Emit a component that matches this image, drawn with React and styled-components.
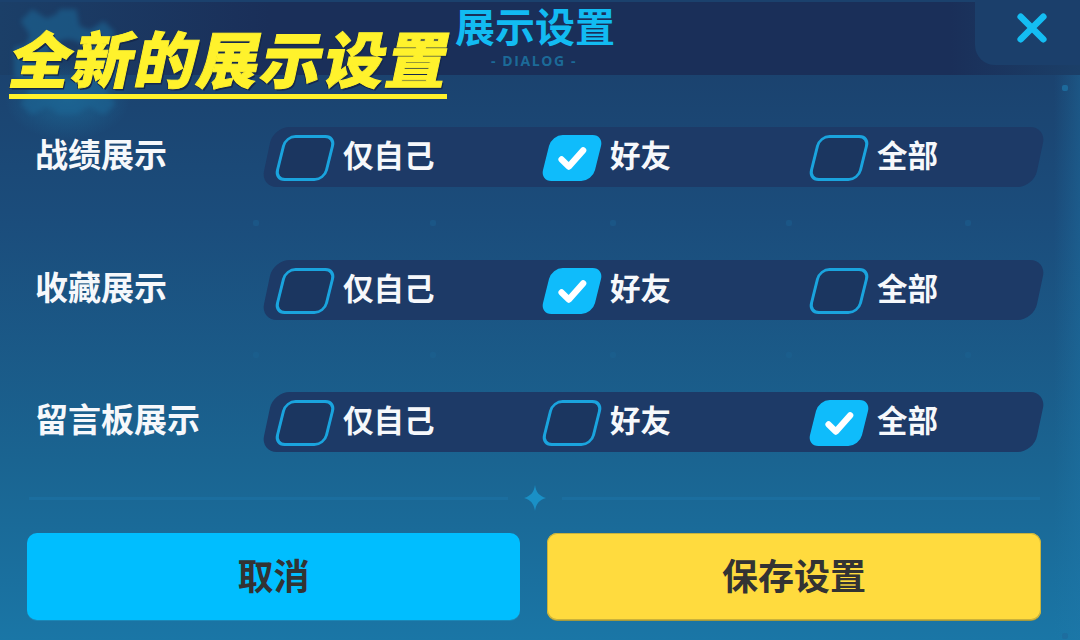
import React from 'react';
import styled, { createGlobalStyle } from 'styled-components';

const GlobalStyle = createGlobalStyle`
  html, body {
    margin: 0;
    padding: 0;
    background: #1b4a76;
  }
  * {
    box-sizing: border-box;
  }
`;

const FONT = '"Noto Sans CJK SC", "Noto Sans", sans-serif';

const Dialog = styled.div`
  position: relative;
  width: 1080px;
  height: 640px;
  overflow: hidden;
  display: flex;
  flex-direction: column;
  font-family: ${FONT};
  background: linear-gradient(180deg, #1b416d 8%, #1b4d7c 35%, #1a6491 72%, #1a76a6 100%);
`;

const EdgeShade = styled.div`
  position: absolute;
  top: 0;
  right: 0;
  bottom: 0;
  width: 26px;
  background: linear-gradient(90deg, rgba(30, 120, 170, 0) 0%, rgba(30, 120, 170, 0.35) 100%);
  pointer-events: none;
`;

const GearGlow = styled.div`
  position: absolute;
  left: 5px;
  top: 60px;
  width: 125px;
  height: 80px;
  border-radius: 50%;
  background: radial-gradient(closest-side, rgba(28, 105, 150, 0.8), rgba(28, 105, 150, 0));
`;

const Gear = styled.svg`
  position: absolute;
  left: 14px;
  top: 6px;
  width: 108px;
  height: 108px;
  color: #1c6594;
  opacity: 0.6;
  filter: blur(2.5px);
`;

const Dot = styled.i`
  position: absolute;
  left: ${(p) => p.$x}px;
  top: ${(p) => p.$y}px;
  width: 6px;
  height: 6px;
  border-radius: 2px;
  background: #1d6d9f;
  opacity: ${(p) => p.$o || 0.7};
`;

const Header = styled.header`
  position: relative;
  flex: none;
  height: 73px;
  margin-top: 2px;
  background: linear-gradient(90deg, #1b3f68 0%, #1a2f59 25%, #1a2f59 88%, #1b3f68 100%);
  display: flex;
  flex-direction: column;
  align-items: center;
`;

const Title = styled.h1`
  margin: -2px 0 0 -10px;
  font-size: 40px;
  line-height: 50px;
  font-weight: 700;
  color: #12bbf2;
`;

const SubTitle = styled.div`
  margin: 2px 0 0 -12px;
  font-family: "Open Sans", "Liberation Sans", sans-serif;
  font-size: 14px;
  line-height: 18px;
  font-weight: 700;
  letter-spacing: 1.6px;
  color: #1c6a98;
`;

const CloseTab = styled.button`
  position: absolute;
  right: 0;
  top: -2px;
  width: 105px;
  height: 65px;
  padding: 0 32px 10px 0;
  border: 0;
  border-bottom-left-radius: 20px;
  background: #1b3f6b;
  display: flex;
  align-items: center;
  justify-content: flex-end;
  color: #14bdf3;
`;

const Promo = styled.div`
  position: absolute;
  left: 9px;
  top: 24px;
  width: 438px;
  height: 75px;
  border-bottom: 5px solid #fff22c;
  text-align: center;
  white-space: nowrap;
`;

const PromoText = styled.span`
  display: inline-block;
  margin: -2px 0 0 3px;
  font-size: 61px;
  line-height: 70px;
  font-weight: 900;
  letter-spacing: 1.8px;
  color: #fff22c;
  -webkit-text-stroke: 1px #fff22c;
  transform: skewX(-12deg);
  text-shadow: 2px 2px 0 #14284d, -1px 1px 0 #14284d;
`;

const Rows = styled.div`
  display: flex;
  flex-direction: column;
  gap: 72.5px;
  margin-top: 52px;
  padding: 0 35px;
`;

const Row = styled.div`
  display: flex;
  align-items: center;
  height: 60px;
`;

const RowLabel = styled.div`
  flex: none;
  width: 227px;
  margin-top: -8px;
  font-size: 33px;
  line-height: 44px;
  font-weight: 700;
  color: #f6f8fb;
`;

const Track = styled.div`
  position: relative;
  width: 783px;
  height: 60px;
  padding-left: 13px;
  display: grid;
  grid-template-columns: repeat(3, 267px);
  align-items: center;

  &::before {
    content: '';
    position: absolute;
    inset: 0 5px;
    border-radius: 16px;
    background: #1d3a67;
    transform: skewX(-12deg);
  }
`;

const Option = styled.label`
  position: relative;
  display: flex;
  align-items: center;
  gap: 8px;
`;

const Box = styled.span`
  flex: none;
  width: 52px;
  height: 46px;
  margin: 2px 0 0 4px;
  border-radius: 11px;
  transform: skewX(-14deg);
  display: flex;
  align-items: center;
  justify-content: center;
  border: ${(p) => (p.$checked ? '0' : '3px solid #1aa4de')};
  background: ${(p) => (p.$checked ? '#0fbcfb' : '#1b3660')};
`;

const Check = styled.svg`
  width: 31px;
  height: 27px;
  transform: skewX(14deg);
`;

const OptionText = styled.span`
  margin: -6px 0 0 4px;
  font-size: 30.5px;
  line-height: 44px;
  font-weight: 700;
  color: #f6f8fb;
`;

const Divider = styled.div`
  display: flex;
  align-items: center;
  gap: 16px;
  margin-top: 34px;
  padding: 0 40px 0 29px;
  height: 24px;
`;

const DividerLine = styled.div`
  flex: 1;
  height: 3px;
  background: #1b6e9f;
`;

const Star = styled.svg`
  flex: none;
  width: 22px;
  height: 26px;
  color: #1a90c6;
`;

const Actions = styled.div`
  display: grid;
  grid-template-columns: 493px 494px;
  gap: 27px;
  margin-top: 23px;
  padding-left: 27px;
`;

const ActionButton = styled.button`
  height: 87px;
  padding: 0 0 5px;
  border: 0;
  border-radius: 10px;
  font-family: ${FONT};
  font-size: 36px;
  font-weight: 700;
  color: #333333;
  background: ${(p) => (p.$primary ? '#ffdb3e' : '#00beff')};
  box-shadow: ${(p) => (p.$primary ? 'inset 0 0 0 1px #c9b23c, 0 1px 0 #a59a3a' : '0 1px 0 #1a88b8')};
`;

const ROWS = [
  { label: '战绩展示', selected: 1 },
  { label: '收藏展示', selected: 1 },
  { label: '留言板展示', selected: 2 },
];

const CHOICES = ['仅自己', '好友', '全部'];

const DOTS = [
  [253, 220, 0.3], [430, 220, 0.3], [610, 220, 0.3], [786, 220, 0.3], [965, 220, 0.3],
  [253, 352, 0.2], [430, 352, 0.2], [610, 352, 0.2], [786, 352, 0.2], [965, 352, 0.2],
  [1062, 85, 0.9], [1062, 633, 1],
];

const GearIcon = () => (
  <Gear viewBox="0 0 130 130" aria-hidden="true">
    <path
      fill="currentColor"
      fillRule="evenodd"
      d="M55 4h20l4 20 12 5 17-11 14 14-11 17 5 12 20 4v20l-20 4-5 12 11 17-14 14-17-11-12 5-4 20H55l-4-20-12-5-17 11-14-14 11-17-5-12-20-4V51l20-4 5-12-11-17L22 4l17 11 12-5zM65 40a25 25 0 1 0 .1 0z"
    />
  </Gear>
);

const CloseIcon = () => (
  <svg width="32" height="32" viewBox="0 0 34 34" aria-hidden="true">
    <path d="M5 5 29 29M29 5 5 29" fill="none" stroke="currentColor" strokeWidth="7" strokeLinecap="round" />
  </svg>
);

const CheckIcon = () => (
  <Check viewBox="0 0 34 30" aria-hidden="true">
    <path d="M5 16 13 24 29 6" fill="none" stroke="#fff" strokeWidth="7" strokeLinecap="round" strokeLinejoin="round" />
  </Check>
);

const App = () => (
  <>
    <GlobalStyle />
    <Dialog>
      <EdgeShade />
      <Header>
        <Title>展示设置</Title>
        <SubTitle>- DIALOG -</SubTitle>
        <CloseTab aria-label="关闭">
          <CloseIcon />
        </CloseTab>
      </Header>
      <GearGlow />
      <GearIcon />
      {DOTS.map(([x, y, o]) => (
        <Dot key={`${x}-${y}`} $x={x} $y={y} $o={o} />
      ))}
      <Promo>
        <PromoText>全新的展示设置</PromoText>
      </Promo>
      <Rows>
        {ROWS.map((row) => (
          <Row key={row.label}>
            <RowLabel>{row.label}</RowLabel>
            <Track>
              {CHOICES.map((choice, i) => (
                <Option key={choice}>
                  <Box $checked={i === row.selected}>{i === row.selected && <CheckIcon />}</Box>
                  <OptionText>{choice}</OptionText>
                </Option>
              ))}
            </Track>
          </Row>
        ))}
      </Rows>
      <Divider>
        <DividerLine />
        <Star viewBox="0 0 22 26" aria-hidden="true">
          <path fill="currentColor" d="M11 0c1 7 4 11 11 13-7 2-10 6-11 13-1-7-4-11-11-13 7-2 10-6 11-13z" />
        </Star>
        <DividerLine />
      </Divider>
      <Actions>
        <ActionButton>取消</ActionButton>
        <ActionButton $primary>保存设置</ActionButton>
      </Actions>
    </Dialog>
  </>
);

export default App;
